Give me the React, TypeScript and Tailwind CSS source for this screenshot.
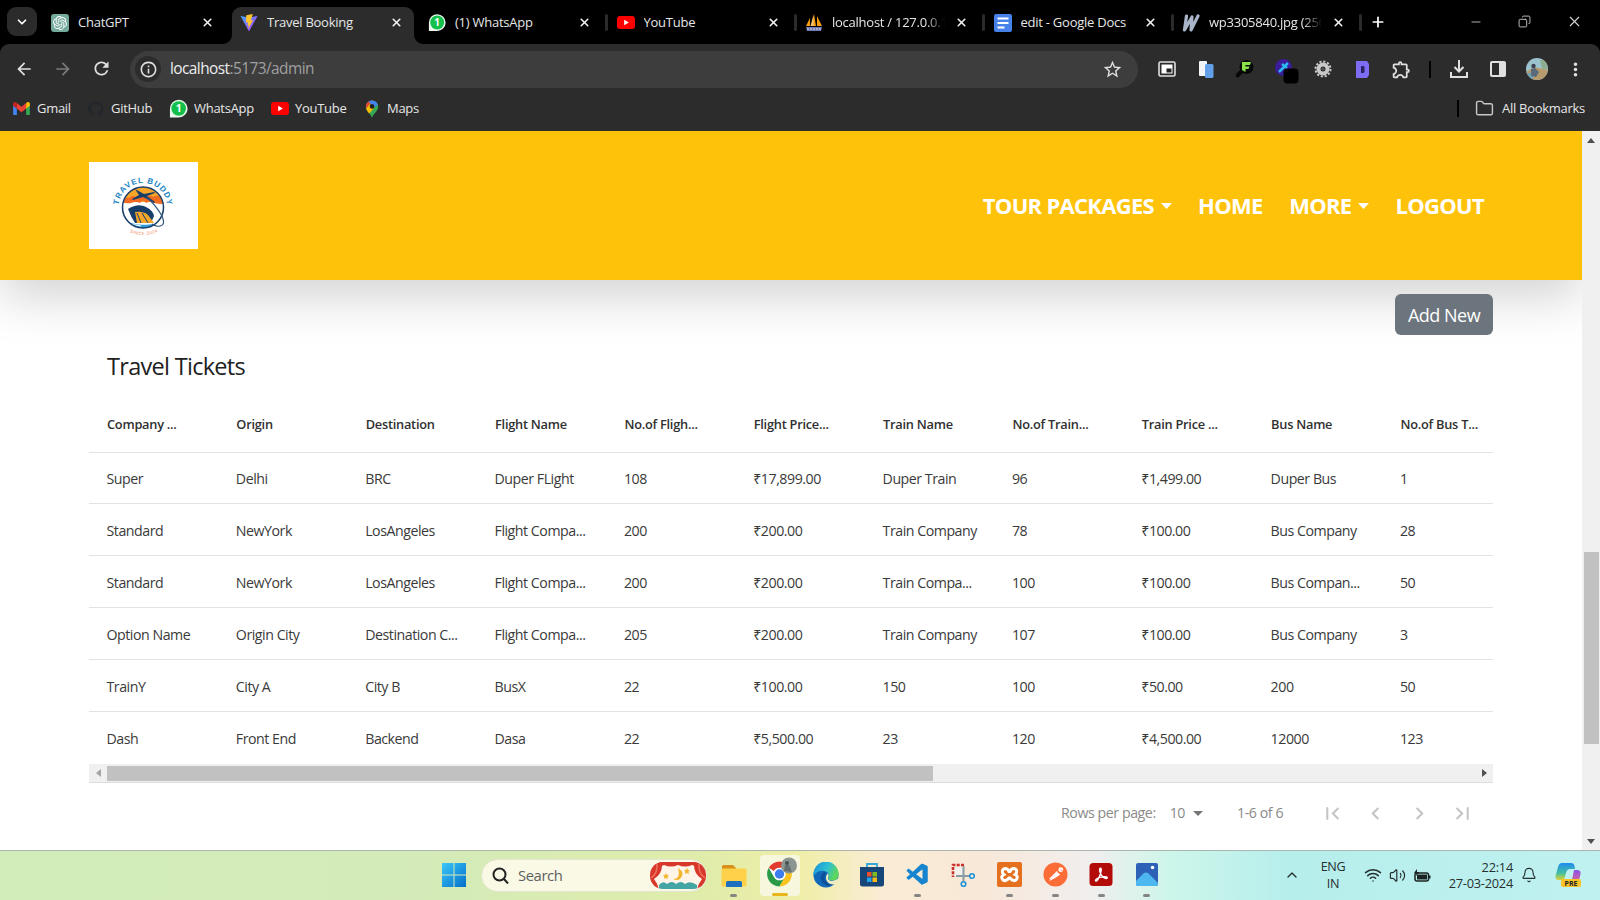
import type { ReactNode } from "react";
import { MdArrowBack, MdArrowForward, MdRefresh, MdInfoOutline, MdStarBorder, MdOutlineExtension, MdMoreVert, MdFirstPage, MdChevronLeft, MdChevronRight, MdLastPage } from "react-icons/md";
import { ChevronDown, ChevronUp, Wifi, Volume2, Bell, Folder, X, Plus, Minus, Copy } from "lucide-react";
import { SiOpenai } from "react-icons/si";
import { VscVscode } from "react-icons/vsc";

const YouTubeIcon = () => (
  <svg viewBox="0 0 18 13" className="h-[13px] w-[18px]"><rect width="18" height="13" rx="3" fill="#f00" /><path d="M7.2 3.8v5.4l4.6-2.7z" fill="#fff" /></svg>
);
const WhatsIcon = () => (
  <svg viewBox="0 0 20 20" className="h-[19px] w-[19px]">
    <path d="M1 19.5V10a9.3 9.3 0 1 1 9.3 9.4z" fill="#e9f7ec" />
    <circle cx="10.2" cy="10" r="7.7" fill="#12c04b" />
    <text x="10.2" y="14" textAnchor="middle" fontSize="11" fontWeight="700" fill="#fff" fontFamily="Open Sans, sans-serif">1</text>
  </svg>
);
const ViteIcon = () => (
  <svg viewBox="0 0 18 18" className="h-[18px] w-[18px]">
    <defs><linearGradient id="vite" x1="0" y1="0" x2="1" y2="1"><stop stopColor="#41a8ff" /><stop offset="1" stopColor="#bd34fe" /></linearGradient></defs>
    <path d="M0.5 2 9 17.6 17.5 2 9 3.500z" fill="url(#vite)" />
    <path d="M12.8.1 6.300 1.3 6 8.6l2-.4-.6 3.200 1.4-.4-.9 4.4 5.200-9.400-2.300.4z" fill="#ffc52e" />
  </svg>
);
const GmailIcon = () => (
  <svg viewBox="0 0 18 14" className="h-[13px] w-[17px]">
    <path d="M0 2v11a1 1 0 0 0 1 1h3V5z" fill="#4285f4" /><path d="M18 2v11a1 1 0 0 1-1 1h-3V5z" fill="#34a853" />
    <path d="M4 1v6l5 4 5-4V1L9 5z" fill="#ea4335" /><path d="M0 2v2l4 3.2V1.2L2.8.4A1.8 1.8 0 0 0 0 2z" fill="#c5221f" /><path d="M18 2v2l-4 3.2V1.2l1.200-.8A1.800 1.800 0 0 1 18 2z" fill="#fbbc04" />
  </svg>
);
const MapsIcon = () => (
  <svg viewBox="0 0 14 18" className="h-[18px] w-[14px]">
    <clipPath id="pin"><path d="M7 18C6 14 .8 11.500 .8 6.600a6.200 6.200 0 0 1 12.400 0C13.200 11.500 8 14 7 18z" /></clipPath>
    <g clipPath="url(#pin)"><rect width="14" height="18" fill="#34a853" /><path d="M0 9.500 9 0H0z" fill="#ea4335" /><path d="M3 1 9-1l6 5-6 3z" fill="#4285f4" /><path d="M0 10 5 4l4 4-6 7z" fill="#fbbc04" /></g>
    <circle cx="7" cy="6.400" r="2.300" fill="#222" />
  </svg>
);
const MyAdminIcon = () => (
  <svg viewBox="0 0 18 18" className="h-[18px] w-[18px]"><path d="M1 12 5 4v8zM6 12 9 0l2 12zM12 12V2l5 10z" fill="#f89c0e" /><path d="M5.500 12 8.500 1v11z" fill="#f5c274" /><path d="M1 13h16l-1 4H2z" fill="#6c78af" /><path d="M2 15h14" stroke="#ddd" strokeDasharray="2 1" /></svg>
);
const DocsIcon = () => (
  <svg viewBox="0 0 18 18" className="h-[18px] w-[18px]"><rect width="18" height="18" rx="2" fill="#4682ea" /><path d="M3.500 4.500h11M3.500 9h11M3.500 13.500h7" stroke="#fff" strokeWidth="2" /></svg>
);
const WIcon = () => (
  <svg viewBox="0 0 18 18" className="h-[18px] w-[18px]" fill="none" stroke="#a9b5c8" strokeWidth="3.200" strokeLinecap="round" strokeLinejoin="round"><path d="M4.500 2 2.500 16 10 3l-1 13L16 2" /></svg>
);
const GptIcon = () => (
  <span className="flex h-[18px] w-[18px] items-center justify-center rounded-[3px] bg-[#74aa9c]"><SiOpenai size={14} color="#fff" /></span>
);

function Tab({ icon, title, divider, fade }: { icon: ReactNode; title: string; divider?: boolean; fade?: boolean }) {
  return (
    <div className="flex h-[37px] w-[188.500px] shrink-0 items-center pl-[8px]">
      <span className="flex w-[18px] justify-center">{icon}</span>
      <span className={`ml-[9px] mt-[1px] w-[113px] overflow-hidden whitespace-nowrap text-[13px] tracking-[-0.250px] text-[#e6e6e6] ${fade ? "[mask-image:linear-gradient(to_right,black_83%,transparent)]" : ""}`}>{title}</span>
      <X size={13} strokeWidth={3} className="ml-[10px] text-[#f2f2f2]" />
      {divider && <i className="ml-[14px] h-[17px] w-[3px] rounded bg-[#2b2b2b]" />}
    </div>
  );
}

const columns = ["Company ...", "Origin", "Destination", "Flight Name", "No.of Fligh...", "Flight Price...", "Train Name", "No.of Train...", "Train Price ...", "Bus Name", "No.of Bus T..."];
const rows = [
  ["Super", "Delhi", "BRC", "Duper FLight", "108", "₹17,899.00", "Duper Train", "96", "₹1,499.00", "Duper Bus", "1"],
  ["Standard", "NewYork", "LosAngeles", "Flight Compa...", "200", "₹200.00", "Train Company", "78", "₹100.00", "Bus Company", "28"],
  ["Standard", "NewYork", "LosAngeles", "Flight Compa...", "200", "₹200.00", "Train Compa...", "100", "₹100.00", "Bus Compan...", "50"],
  ["Option Name", "Origin City", "Destination C...", "Flight Compa...", "205", "₹200.00", "Train Company", "107", "₹100.00", "Bus Company", "3"],
  ["TrainY", "City A", "City B", "BusX", "22", "₹100.00", "150", "100", "₹50.00", "200", "50"],
  ["Dash", "Front End", "Backend", "Dasa", "22", "₹5,500.00", "23", "120", "₹4,500.00", "12000", "123"],
];

function Logo() {
  return (
    <div className="h-[87px] w-[109px] bg-white">
      <svg viewBox="0 0 109 87" className="h-full w-full">
        <defs>
          <clipPath id="disc"><circle cx="54" cy="45.500" r="20.500" /></clipPath>
          <path id="arcTop" d="M29.800 43A24.300 24.300 0 0 1 78.200 43" />
          <path id="arcBottom" d="M38 69Q54 77 71 69" />
        </defs>
        <g clipPath="url(#disc)">
          <rect x="30" y="22" width="50" height="50" fill="#fff" />
          <path d="M30 22h50v18H30z" fill="#f5a62b" />
          <path d="M32 40q3-5 8-4 4-4 8 0 4-3 8 0 4-4 8-1 5-3 10 1v6q-5 0-9-1-3-3-8 0-3-5-6 0-4-2-9 0-5 1-10-1z" fill="#f26b21" />
          <path d="M39 47q11-7 20-1 5 3 6 8l-3 7H46q-4-6-7-14z" fill="#183d68" />
          <path d="M46 50q9-1 13 3l6 8H48q-1-6-2-11z" fill="#f5a62b" />
          <path d="M42 49q9-2 16 2M48 51l4 10M53 51l6 10" fill="none" stroke="#183d68" strokeWidth="1" />
          <path d="M32 60q8 0 14 2t28-1v9H32z" fill="#2d9bdc" />
          <path d="M38 63q8-1 14 1" fill="none" stroke="#fff" strokeWidth="1" />
        </g>
        <circle cx="54" cy="45.500" r="20.500" fill="none" stroke="#183d68" strokeWidth="1.500" />
        <path d="m46 27 9 5 10-2 1 1-8 3 8 6-1 1-11-6-10 3-1-1 7-4z" fill="#183d68" />
        <path d="M57 35q10 8 16 19 4 9-2 10-4 1-8-2" fill="none" stroke="#31557f" strokeWidth="1.200" />
        <text fontSize="8" fontWeight="700" fill="#2285c5" fontFamily="Liberation Sans Narrow, Liberation Sans, sans-serif" letterSpacing="0.850"><textPath href="#arcTop">TRAVEL BUDDY</textPath></text>
        <text fontSize="4.500" fill="#f08a5d" fontFamily="Liberation Sans, sans-serif" letterSpacing=".400"><textPath href="#arcBottom" startOffset="3">SINCE 2024</textPath></text>
      </svg>
    </div>
  );
}

const Caret = () => <svg viewBox="0 0 11 6" className="ml-[6.500px] h-[6px] w-[11px]"><path d="M0 0h11L5.500 6z" fill="#fff" /></svg>;

function Tile({ children, running }: { children: ReactNode; running?: boolean }) {
  return (
    <div className="flex h-[42px] w-[45.900px] shrink-0 flex-col items-center">
      <div className="flex h-[39px] items-center justify-center">{children}</div>
      {running && <i className="h-[3px] w-[7px] rounded-full bg-[#858585]" />}
    </div>
  );
}

export default function App() {
  return (
    <div className="flex h-[900px] w-[1600px] flex-col overflow-hidden bg-white font-['Open_Sans','Noto_Sans',sans-serif] antialiased">
      <div className="flex h-[44px] shrink-0 items-start bg-black pt-[7px]">
        <div className="ml-[7px] flex h-[29px] w-[30px] items-center justify-center rounded-[9px] bg-[#2b2b2b] text-white"><ChevronDown size={14} strokeWidth={3} /></div>
        <div className="flex h-[37px] pl-[6px]">
          <div className="-mt-[3px] w-[189px]"><Tab icon={<GptIcon />} title="ChatGPT" /></div>
          <div className="relative w-[182px] rounded-t-[9px] bg-[#2c2c2c]">
            <svg viewBox="0 0 9 9" className="absolute -left-[9px] bottom-0 h-[9px] w-[9px]"><path d="M9 0v9H0A9 9 0 0 0 9 0z" fill="#2c2c2c" /></svg>
            <svg viewBox="0 0 9 9" className="absolute -right-[9px] bottom-0 h-[9px] w-[9px]"><path d="M0 0v9h9A9 9 0 0 1 0 0z" fill="#2c2c2c" /></svg>
            <div className="-mt-[3px]"><Tab icon={<ViteIcon />} title="Travel Booking" /></div>
          </div>
          <div className="-mt-[3px] ml-[6px] flex">
            <Tab icon={<WhatsIcon />} title="(1) WhatsApp" divider />
            <Tab icon={<YouTubeIcon />} title="YouTube" divider />
            <Tab icon={<MyAdminIcon />} title="localhost / 127.0.0.1" divider fade />
            <Tab icon={<DocsIcon />} title="edit - Google Docs" divider />
            <Tab icon={<WIcon />} title="wp3305840.jpg (256" divider fade />
          </div>
        </div>
        <Plus size={16} strokeWidth={2.600} className="ml-[7px] mt-[7px] text-white" />
        <div className="ml-auto flex items-center pr-[17px] pt-[6px] text-[#d5d5d5]">
          <Minus size={14} strokeWidth={1.400} />
          <Copy size={13} strokeWidth={1.600} className="ml-[35px] -scale-x-100" />
          <X size={17} strokeWidth={1.600} className="ml-[35px]" />
        </div>
      </div>

      <div className="h-[87px] shrink-0 bg-black">
        <div className="h-full rounded-t-[9px] bg-[#2c2c2c]">
          <div className="flex h-[50px] items-center text-[#e0e0e0]">
            <MdArrowBack size={20} className="-mt-[1px] ml-[14px]" />
            <MdArrowForward size={20} className="-mt-[1px] ml-[19px] text-[#7b7b7b]" />
            <MdRefresh size={21} className="-mt-[1px] ml-[18px]" />
            <div className="ml-[18px] flex h-[37px] w-[1008px] items-center rounded-full bg-[#3d3d3d]">
              <span className="ml-[5px] flex h-[26px] w-[26px] items-center justify-center rounded-full bg-[#2c2c2c]"><MdInfoOutline size={19} /></span>
              <span className="ml-[9px] text-[15.400px] tracking-[-0.550px] text-[#a0a0a0]"><span className="text-[#ededed]">localhost</span>:5173/admin</span>
              <MdStarBorder size={21} className="ml-auto mr-[15px]" />
            </div>
            <div className="flex flex-1 items-center">
              <svg viewBox="0 0 18 16" className="ml-[20px] h-[16px] w-[18px]"><rect x="1" y="1" width="16" height="14" rx="1.500" fill="none" stroke="#e0e0e0" strokeWidth="1.600" /><rect x="3.500" y="3.500" width="11" height="9" fill="#fff" /><rect x="8.500" y="7.500" width="5" height="4" fill="#222" /></svg>
              <svg viewBox="0 0 15 17" className="ml-[23px] h-[17px] w-[15px]"><rect width="8" height="15" rx="1" fill="#f2f5fa" /><rect x="6" y="3" width="8.500" height="14" rx="1.500" fill="#62a0ea" /></svg>
              <svg viewBox="0 0 18 18" className="ml-[22px] h-[18px] w-[18px]"><circle cx="10.500" cy="7" r="7" fill="#050805" /><path d="m1.500 15.500 5-5" stroke="#050805" strokeWidth="4" strokeLinecap="round" /><path d="M6 2h9l-1 3H9.500v1.500h4L12.500 9H9.500v3L6 10z" fill="#8be14a" /></svg>
              <svg viewBox="0 0 24 25" className="ml-[21px] mt-[5px] h-[25px] w-[24px]"><circle cx="8.500" cy="8.500" r="8.500" fill="#3b1c9a" /><path d="m4 13 9-9M7 5l5 4" stroke="#29b9ef" strokeWidth="2.500" /><rect x="8.500" y="9.500" width="15" height="15" rx="4" fill="#000" /></svg>
              <svg viewBox="0 0 18 18" className="ml-[15px] h-[18px] w-[18px]"><circle cx="9" cy="9" r="7.500" fill="none" stroke="#c8c8c8" strokeWidth="2" strokeDasharray="2.200 1.730" /><circle cx="9" cy="9" r="4.500" fill="none" stroke="#c8c8c8" strokeWidth="4" /><circle cx="9" cy="9" r="1.500" fill="#555" /></svg>
              <svg viewBox="0 0 15 17" className="ml-[23px] h-[17px] w-[15px]"><path d="M1 0h11l2 3v11l-2 3H1z" fill="#7d6df2" /><path d="M6 5h2.500L9.500 6v5l-1 1H6z" fill="#2a2560" /></svg>
              <MdOutlineExtension size={21} className="ml-[21px]" />
              <i className="ml-[17px] h-[17px] w-[2px] bg-black" />
              <svg viewBox="0 0 18 18" className="ml-[19px] h-[18px] w-[18px]" fill="none" stroke="#e0e0e0" strokeWidth="2"><path d="M9 0v11M4.500 7 9 11.500 13.500 7M1 12v5h16v-5" /></svg>
              <svg viewBox="0 0 16 16" className="ml-[22px] h-[16px] w-[16px]"><rect x="1" y="1" width="14" height="14" rx="1" fill="none" stroke="#e0e0e0" strokeWidth="2" /><path d="M9 1h6v14H9z" fill="#e0e0e0" /></svg>
              <svg viewBox="0 0 22 22" className="ml-[20px] h-[22px] w-[22px]"><clipPath id="ava"><circle cx="11" cy="11" r="11" /></clipPath><g clipPath="url(#ava)"><rect width="22" height="22" fill="#9bc3cd" /><path d="M0 14 8 9l14 3v10H0z" fill="#b89b6d" /><path d="M14 2h8v9h-6z" fill="#8fae91" /><path d="M0 15h7v7H0z" fill="#6da3b4" /><circle cx="7.500" cy="8" r="2.200" fill="#3c4450" /><path d="m5 18 0-7 4-1 4 4-3 5z" fill="#596a7c" /></g></svg>
              <MdMoreVert size={21} className="ml-[17px]" />
            </div>
          </div>
          <div className="flex h-[29px] items-center text-[13px] tracking-[-0.280px] text-[#e6e6e6]">
            <span className="flex w-[76px] items-center gap-[7px] pl-[13px]"><GmailIcon />Gmail</span>
            <span className="flex w-[93px] items-center gap-[7px] pl-[12px]"><svg viewBox="0 0 16 16" className="h-[16px] w-[16px]"><path fill="#23272b" d="M8 0a8 8 0 0 0-2.500 15.600c.4 0 .5-.2.5-.4v-1.500c-2 .4-2.600-.9-2.800-1.400 0-.3-.5-.9-.8-1.100-.3-.2-.7-.5 0-.5.6 0 1 .6 1.200.8.700 1.200 1.900.9 2.400.7 0-.5.300-.9.500-1.100-1.800-.2-3.600-.9-3.600-4 0-.9.300-1.600.8-2.100 0-.2-.4-1 .1-2.100 0 0 .7-.2 2.200.8a7.500 7.500 0 0 1 4 0c1.500-1 2.200-.8 2.200-.8.400 1.100.2 1.900.1 2.100.5.600.8 1.300.8 2.100 0 3.100-1.900 3.800-3.700 4 .3.200.6.700.6 1.500v2.200c0 .2.100.5.500.4A8 8 0 0 0 8 0z" /></svg>GitHub</span>
            <span className="flex w-[102px] items-center gap-[6px]"><WhatsIcon />WhatsApp</span>
            <span className="flex w-[94px] items-center gap-[6px]"><YouTubeIcon />YouTube</span>
            <span className="flex items-center gap-[8px] whitespace-nowrap"><MapsIcon />Maps</span>
            <i className="ml-auto h-[17px] w-[2px] bg-black" />
            <Folder size={19} strokeWidth={1.800} className="ml-[16px] text-[#c8c8c8]" />
            <span className="ml-[8px] mr-[15px] whitespace-nowrap">All Bookmarks</span>
          </div>
        </div>
      </div>

      <div className="flex h-[719px] shrink-0 overflow-hidden">
        <main className="flex w-[1582px] shrink-0 flex-col overflow-hidden">
          <header className="flex h-[149px] shrink-0 items-center bg-[#ffc20a] pl-[89px] shadow-[0_17px_50px_rgba(0,0,0,0.175)]">
            <Logo />
            <nav className="ml-auto mr-[98px] flex items-center text-[22px] font-bold tracking-[-0.700px] text-white">
              <a className="flex items-center">TOUR PACKAGES<Caret /></a>
              <a className="ml-[26.500px]">HOME</a>
              <a className="ml-[26.500px] flex items-center">MORE<Caret /></a>
              <a className="ml-[26.500px]">LOGOUT</a>
            </nav>
          </header>
          <section className="flex flex-col px-[89px] pt-[14px]">
            <button className="h-[41px] w-[98px] self-end rounded-[6px] bg-[#6c757d] pt-[2px] text-[18px] tracking-[-0.500px] text-white">Add New</button>
            <h2 className="mt-[13px] flex h-[38px] items-center pl-[18px] text-[23.500px] tracking-[-0.700px] text-[#212121]">Travel Tickets</h2>
            <div className="mt-[11px] w-[1404px] overflow-hidden text-[#3a3a3a]">
              <div className="grid h-[56px] grid-cols-[repeat(11,129.350px)] items-center border-b border-[#e3e3e3] text-[12.800px] font-semibold tracking-[-0.250px] text-[#303030]">
                {columns.map((c) => <span key={c} className="whitespace-nowrap pl-[18px]">{c}</span>)}
              </div>
              {rows.map((r, i) => (
                <div key={i} className={`grid grid-cols-[repeat(11,129.350px)] items-center pt-[2px] text-[14.200px] tracking-[-0.470px] ${i === 0 ? "h-[51px] border-b border-[#e3e3e3]" : i < 5 ? "h-[52px] border-b border-[#e3e3e3]" : "h-[52px]"}`}>
                  {r.map((c, j) => <span key={j} className="whitespace-nowrap pl-[17.500px]">{c}</span>)}
                </div>
              ))}
              <div className="flex h-[19px] items-center border-b border-[#dcdcdc] bg-[#f0f0f0]">
                <svg viewBox="0 0 5 8" className="ml-[7px] h-[8px] w-[5px]"><path d="M5 0v8L0 4z" fill="#a3a3a3" /></svg>
                <i className="ml-[6px] h-[15px] w-[826px] bg-[#c1c1c1]" />
                <svg viewBox="0 0 5 8" className="ml-auto mr-[6px] h-[8px] w-[5px]"><path d="M0 0v8l5-4z" fill="#505050" /></svg>
              </div>
            </div>
            <div className="flex h-[60px] w-[1404px] items-center justify-end pr-[18px] text-[14.200px] tracking-[-0.440px] text-[#8a8a8a]">
              <span>Rows per page:</span>
              <span className="ml-[14px]">10</span>
              <svg viewBox="0 0 10 5" className="ml-[8px] h-[5px] w-[10px]"><path d="M0 0h10L5 5z" fill="#757575" /></svg>
              <span className="ml-[34px]">1-6 of 6</span>
              <span className="ml-[37px] flex gap-[18.300px] text-[#c4c4c4]"><MdFirstPage size={25} /><MdChevronLeft size={25} /><MdChevronRight size={25} /><MdLastPage size={25} /></span>
            </div>
          </section>
        </main>
        <div className="flex w-[18px] flex-col items-center bg-[#f0f0f0]">
          <svg viewBox="0 0 8 5" className="mt-[7px] h-[5px] w-[8px]"><path d="M0 5h8L4 0z" fill="#505050" /></svg>
          <i className="mt-[409px] h-[192px] w-[15px] bg-[#c1c1c1]" />
          <svg viewBox="0 0 8 5" className="mb-[6px] mt-auto h-[5px] w-[8px]"><path d="M0 0h8L4 5z" fill="#505050" /></svg>
        </div>
      </div>

      <footer className="flex h-[50px] shrink-0 items-start border-t border-[#aab5ae] bg-[linear-gradient(90deg,#d2edb9_0,#d4ebb8_440px,#e0ecaa_700px,#efeea8_800px,#faecd4_880px,#f8e8d8_980px,#f1eeee_1090px,#cdf6ea_1170px,#b6eeec_1290px,#bff1f0_1600px)] pt-[4px]">
        <div className="ml-[431px] flex w-[46px] justify-center pt-[8px]">
          <svg viewBox="0 0 24 24" className="h-[24px] w-[24px]"><defs><linearGradient id="win" x1="0" y1="0" x2="1" y2="1"><stop stopColor="#3ac8fa" /><stop offset="1" stopColor="#036dc9" /></linearGradient></defs><path d="M0 0h11.500v11.500H0zM12.500 0H24v11.500H12.500zM0 12.500h11.500V24H0zM12.500 12.500H24V24H12.500z" fill="url(#win)" /></svg>
        </div>
        <div className="ml-[4px] mt-[4px] flex h-[33px] w-[226px] items-center rounded-full border border-[#e3e6cf] bg-[#f9f9e6]">
          <svg viewBox="0 0 17 17" className="-mt-[1px] ml-[10px] h-[17px] w-[17px]" fill="none" stroke="#222" strokeWidth="2"><circle cx="7.500" cy="7.500" r="6" /><path d="m12 12 4 4.500" /></svg>
          <span className="-mt-[1px] ml-[9px] text-[14.800px] tracking-[-0.400px] text-[#606060]">Search</span>
          <svg viewBox="0 0 56 28" className="ml-auto h-[28px] w-[56px]"><clipPath id="stage"><rect width="56" height="27" rx="13" /></clipPath><g clipPath="url(#stage)"><rect width="56" height="28" fill="#fff4e8" /><path d="M0 0h56v3q-7 3-14 0-7 3-14 0-7 3-14 0-5 3-14 0z" fill="#d8382c" /><path d="M0 0h12q1 12-8 17 4 5 5 11H0zM56 0H44q-1 12 8 17-4 5-5 11h9z" fill="#d8382c" /><path d="M7 2q1 9-6 14M49 2q-1 9 6 14" fill="none" stroke="#f0705c" strokeWidth="1.500" /><path d="M9 23q4-5 8-1 5-4 9 0 5-4 9 0 5-4 12 1v5H9z" fill="#45a5a5" /><path d="M28 6q8 5 2 11-3 2-7 0 8 0 5-11z" fill="#f3b52d" /><path d="m37 6 1 2 2 .3-1.500 1.500.4 2.200-1.900-1-2 1 .4-2.200L34 8.300l2-.3zM16 11l1 2 2 .3-1.500 1.500.4 2.200-1.900-1-2 1 .4-2.200-1.400-1.500 2-.3z" fill="#f3b52d" /></g></svg>
        </div>
        <div className="ml-[4px] flex">
          <Tile running><svg viewBox="0 0 26 22" className="mt-[2px] h-[22px] w-[26px]"><path d="M1 3V1.500A1.500 1.500 0 0 1 2.500 0H12l3 3v2H1z" fill="#d89018" /><rect x="0.500" y="3.500" width="25" height="18" rx="1.500" fill="#ffd04a" /><path d="M5 22v-4.500A1.500 1.500 0 0 1 6.500 16h13a1.500 1.500 0 0 1 1.500 1.500V22z" fill="#1d6fbf" /></svg></Tile>
          <div className="flex h-[41px] w-[45.900px] flex-col items-center">
            <div className="flex h-[41px] w-[40px] flex-col items-center justify-end rounded-[4px] bg-[#f6f7dc]">
              <svg viewBox="0 0 32 30" className="mb-[6px] ml-[4px] h-[30px] w-[32px]"><circle cx="13.500" cy="17" r="12.500" fill="#fff" /><path d="M2.700 10.800A12.500 12.500 0 0 1 24.300 10.800H13.500A6.200 6.200 0 0 0 8 14z" fill="#e33b2e" /><path d="M2.700 10.800A12.500 12.500 0 0 0 13.500 29.500L19 20A6.200 6.200 0 0 1 8 20z" fill="#299b47" /><path d="M24.300 10.800A12.500 12.500 0 0 1 13.500 29.500L19 20A6.200 6.200 0 0 0 13.500 10.800z" fill="#f9c31b" /><circle cx="13.500" cy="17" r="5.800" fill="#fff" /><circle cx="13.500" cy="17" r="4.700" fill="#3b7ded" /><circle cx="23" cy="8.500" r="8" fill="#8b9592" /><circle cx="21" cy="6" r="2" fill="#4a4f52" /><path d="m18 14 1-6h4l3 7z" fill="#646f73" /></svg>
              <i className="h-[3px] w-[16px] rounded-full bg-[#e8b51c]" />
            </div>
          </div>
          <Tile><svg viewBox="0 0 26 26" className="h-[26px] w-[26px]"><defs><linearGradient id="edge" x1="0" y1="0" x2="1" y2=".4"><stop stopColor="#1590dc" /><stop offset=".6" stopColor="#30c0d0" /><stop offset="1" stopColor="#5cd65c" /></linearGradient></defs><circle cx="13" cy="13" r="12.500" fill="#1168b8" /><path d="M.500 12A12.500 12.500 0 0 1 25.500 12q.5 6-6 6.500-5 0-4-3 1.500-5-4-6.500-7-1-11 5z" fill="url(#edge)" /><path d="M11 10q-6 5-1 11 5 5 12 .5-6 2-9-2-3-3-.500-7 1-3-1.500-2.500z" fill="#0d4f9b" /><path d="M14.500 11.500q2 1.500.5 4.500 0 2.500 4 3 3-.3 7-3v4.500l-3 1.500q-8 2-10-5 0-4 1.500-5.500z" fill="#f1ecc0" /></svg></Tile>
          <Tile><svg viewBox="0 0 24 26" className="h-[26px] w-[24px]"><path d="M7 6V2h10v4" fill="none" stroke="#36a5da" strokeWidth="1.800" /><path d="M0 5h24v17a2.500 2.500 0 0 1-2.500 2.500h-19A2.500 2.500 0 0 1 0 22z" fill="#174678" /><path d="M7 10h4.500v4.500H7z" fill="#ef4f26" /><path d="M12.500 10H17v4.500h-4.500z" fill="#7fba20" /><path d="M7 15.500h4.500V20H7z" fill="#22a4ea" /><path d="M12.500 15.500H17V20h-4.500z" fill="#fdb813" /></svg></Tile>
          <Tile running><VscVscode size={26} color="#1684cf" /></Tile>
          <Tile><svg viewBox="0 0 24 26" className="h-[26px] w-[24px]" fill="none"><path d="M3 5h9v9H3z" fill="#f2efec" /><path d="M13 3H2v12" stroke="#c9302c" strokeWidth="2.600" strokeDasharray="3 1.300" /><path d="M12.500 4v15M5 14h13" stroke="#8a9aa5" strokeWidth="2" /><circle cx="12.500" cy="22" r="2.300" stroke="#2094d8" strokeWidth="1.600" /><circle cx="21" cy="14" r="2.300" stroke="#2094d8" strokeWidth="1.600" /></svg></Tile>
          <Tile running><svg viewBox="0 0 25 25" className="h-[25px] w-[25px]"><rect width="25" height="25" rx="2" fill="#e5711f" /><path d="M8 6.500q-4 1-2 5l1 1q-4 2-1 5.500 3 2 6-2h1q3 4 6 2 3-3.500-1-5.500l1-1q2-4-2-5-3 0-4 3h-1q-1-3-4-3z" fill="none" stroke="#fff" strokeWidth="3" /></svg></Tile>
          <Tile running><svg viewBox="0 0 26 26" className="h-[25px] w-[25px]"><circle cx="13" cy="13" r="12.500" fill="#fb6c37" /><path d="m6 20 9-9 3 2q-5 4-12 7z" fill="#fff" /><path d="m7 18 8-8" stroke="#fff" strokeWidth="1.500" /><circle cx="18.500" cy="8" r="2.500" fill="#fff" /><path d="m18.500 8 1.500 1" stroke="#fb6c37" /></svg></Tile>
          <Tile running><svg viewBox="0 0 24 24" className="h-[23px] w-[24px]"><rect width="24" height="24" rx="4" fill="#b30c08" /><path d="M11.500 5.500c-2 0-.5 5 1 7.500s5.500 4 6 2.500-5-1.500-8-.5-5 3-4 3.800 3-2.300 4.200-5.500 2.300-7.800.8-7.800z" fill="none" stroke="#fff" strokeWidth="1.500" /></svg></Tile>
          <Tile running><svg viewBox="0 0 22 23" className="h-[23px] w-[22px]"><rect width="22" height="23" rx="2" fill="#2d61b8" /><path d="m0 18 8-8q2-1 4 0l10 10v1a2 2 0 0 1-2 2H2a2 2 0 0 1-2-2z" fill="#4db8f0" /><circle cx="16.500" cy="4.500" r="1.800" fill="#fff" /></svg></Tile>
        </div>
        <div className="ml-auto flex h-[40px] items-center text-[#26302f]">
          <ChevronUp size={16} strokeWidth={2} />
          <div className="ml-[18px] mt-[1px] w-[30px] text-center text-[12.600px] leading-[16.500px] tracking-[-0.300px]">ENG<br />IN</div>
          <Wifi size={18} strokeWidth={2} className="ml-[16px]" />
          <Volume2 size={17} strokeWidth={1.700} className="ml-[7px]" />
          <svg viewBox="0 0 17 13" className="ml-[8px] h-[13px] w-[17px]"><rect x="1" y="4" width="13.500" height="8" rx="2" fill="none" stroke="#1c2423" strokeWidth="1.500" /><rect x="3" y="5.500" width="10" height="5" fill="#1c2423" /><path d="M15.500 6.500v3" stroke="#1c2423" strokeWidth="2" /><path d="m3 0-3 4h2.500L2 7l3.500-4H3z" fill="#1c2423" /></svg>
          <div className="ml-[15px] w-[67px] whitespace-nowrap text-right text-[12.800px] leading-[16.500px] tracking-[-0.250px]">22:14<br />27-03-2024</div>
          <Bell size={16} strokeWidth={1.700} className="ml-[8px]" />
          <svg viewBox="0 0 26 26" className="ml-[18px] mr-[19px] h-[26px] w-[26px]"><defs><linearGradient id="cop" x1="0" y1="0" x2="0" y2="1"><stop stopColor="#1e8df0" /><stop offset=".6" stopColor="#45bfa0" /><stop offset="1" stopColor="#e0d030" /></linearGradient><linearGradient id="cop2" x1="0" y1="0" x2="0" y2="1"><stop stopColor="#8a52e8" /><stop offset="1" stopColor="#f0687a" /></linearGradient></defs><path d="M7 1h9q3 0 3.500 3l.5 3h-5q-3 0-4 4l-2 7H4q-4 0-3.500-4L3 5q1-4 4-4z" fill="url(#cop)" /><path d="M19 8h3q4 0 3.500 4l-1.500 6q-1 5-5 5h-6q3-1 4-5z" fill="url(#cop2)" /><rect x="6" y="17" width="20" height="8" rx="2" fill="#fbc52a" /><text x="16" y="23.700" textAnchor="middle" fontSize="7" fontWeight="700" fill="#222" fontFamily="Open Sans, sans-serif">PRE</text></svg>
        </div>
      </footer>
    </div>
  );
}
